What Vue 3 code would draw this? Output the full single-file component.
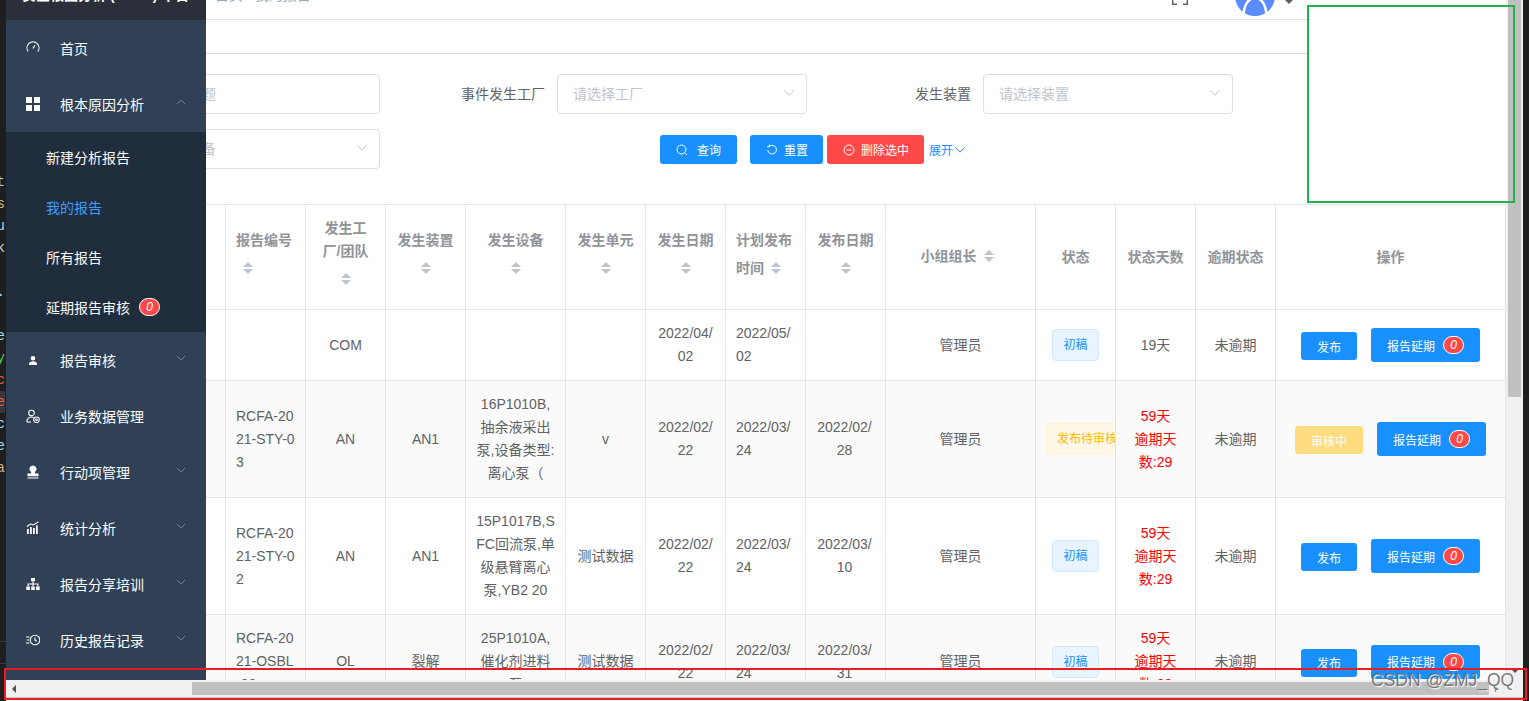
<script setup>
const stripLines = [
  ['nt', '#9cdcfe'], ['t.s', '#d4b483'], ['yu', '#9cdcfe'], ['ck', '#d4d4d4'], ['', ''], ['y.', '#9cdcfe'], ['', ''],
  ['ue', '#9cdcfe'], ['oy', '#4ec96f'], ['rc', '#e0604c'], ['e', '#e0604c'], ['rc', '#9cdcfe'], ['oe', '#9cdcfe'], ['na', '#d4b483']
]

const menu = [
  { label: '首页', fill: '', stroke: 'M2.2 10.5A6 6 0 1 1 11.8 10.5M7 7.5L9 4.2' },
  { label: '根本原因分析', open: true, fill: 'M0 0h6v6H0zM8 0h6v6H8zM0 8h6v6H0zM8 8h6v6H8z', stroke: '', children: [
    { label: '新建分析报告' }, { label: '我的报告', active: true }, { label: '所有报告' }, { label: '延期报告审核', badge: 0 }
  ] },
  { label: '报告审核', arrow: true, fill: 'M7 3a2.3 2.3 0 1 1 0 4.6 2.3 2.3 0 0 1 0-4.6zM3 12v-1.5c0-1.3 2-2.3 4-2.3s4 1 4 2.3V12z', stroke: '' },
  { label: '业务数据管理', fill: '', stroke: 'M5.5 1.2a2.8 2.8 0 1 1 0 5.6 2.8 2.8 0 0 1 0-5.6zM.8 13c0-3 1.8-5 4.7-5 .8 0 1.5.2 2 .5M5 13H.8M10.5 8a2.8 2.8 0 1 1 0 5.6 2.8 2.8 0 0 1 0-5.6zM10.5 10a.8.8 0 1 1 0 1.6.8.8 0 0 1 0-1.6z' },
  { label: '行动项管理', arrow: true, fill: 'M7 .5a3.6 3.6 0 0 1 2 6.6c-.3.4-.2 1 .2 1.4h3.3v2.8h-11V8.5h3.3c.4-.4.5-1 .2-1.4A3.6 3.6 0 0 1 7 .5zM1.5 12.6h11v.9h-11z', stroke: '' },
  { label: '统计分析', arrow: true, fill: 'M1 8h1.8v5H1zM4 6h1.8v7H4zM7 7h1.8v6H7zM10 4.5h1.8V13H10z', stroke: 'M1 5.5L4.5 3 7.5 4 12.5.8' },
  { label: '报告分享培训', arrow: true, fill: 'M5 1h4v3.2H5zM.3 9.5h3.6V13H.3zM5.2 9.5h3.6V13H5.2zM10.1 9.5h3.6V13h-3.6z', stroke: 'M7 4.2v5.3M2.1 9.5V7h9.8v2.5' },
  { label: '历史报告记录', arrow: true, fill: '', stroke: 'M0 4h3.5M.8 7h2.5M0 10h3.5M9 2.2a4.8 4.8 0 1 1 0 9.6 4.8 4.8 0 0 1 0-9.6zM9 4.5v2.7l1.8 1' }
]

const columns = [
  { w: 20, t: '' },
  { w: 80, t: '报告编号', sort: true, left: true },
  { w: 80, t: '发生工厂/团队', sort: true },
  { w: 80, t: '发生装置', sort: true },
  { w: 100, t: '发生设备', sort: true },
  { w: 80, t: '发生单元', sort: true },
  { w: 80, t: '发生日期', sort: true },
  { w: 80, t: '计划发布时间', sort: true, left: true },
  { w: 80, t: '发布日期', sort: true },
  { w: 150, t: '小组组长', sort: true },
  { w: 80, t: '状态' },
  { w: 80, t: '状态天数' },
  { w: 80, t: '逾期状态' },
  { w: 230, t: '操作' }
]

const rows = [
  { cells: ['', 'COM', '', '', '', '2022/04/02', '2022/05/02', '', '管理员'], tag: '初稿', tagType: 'info', days: '19天', late: false, action: '发布' },
  { cells: ['RCFA-2021-STY-03', 'AN', 'AN1', '16P1010B,抽余液采出泵,设备类型:离心泵（', 'v', '2022/02/22', '2022/03/24', '2022/02/28', '管理员'], tag: '发布待审核', tagType: 'warn', days: '59天', overdue: '逾期天数:29', late: true, action: '审核中' },
  { cells: ['RCFA-2021-STY-02', 'AN', 'AN1', '15P1017B,SFC回流泵,单级悬臂离心泵,YB2 20', '测试数据', '2022/02/22', '2022/03/24', '2022/03/10', '管理员'], tag: '初稿', tagType: 'info', days: '59天', overdue: '逾期天数:29', late: true, action: '发布' },
  { cells: ['RCFA-2021-OSBL-02', 'OL', '裂解', '25P1010A,催化剂进料泵', '测试数据', '2022/02/22', '2022/03/24', '2022/03/31', '管理员'], tag: '初稿', tagType: 'info', days: '59天', overdue: '逾期天数:29', late: true, action: '发布' }
]
</script>

<template>
  <div class="page">
    <div class="strip">
      <div v-for="(l, i) in stripLines" :key="i" class="strip-line" :class="{ hot: l[0] === 'e' }" :style="{ color: l[1] }">{{ l[0] }}</div>
      <div class="strip-sep first"></div>
      <div class="strip-sep"></div>
    </div>

    <div class="browser">
      <div class="view">
        <aside class="sidebar">
          <div class="logo"><span>安全根因分析 (RCFA) 平台</span></div>
          <template v-for="m in menu" :key="m.label">
            <div class="menu-item">
              <svg class="menu-icon" viewBox="0 0 14 14">
                <path v-if="m.fill" :d="m.fill" fill="#fff" />
                <path v-if="m.stroke" :d="m.stroke" fill="none" stroke="#fff" stroke-width="1.1" />
              </svg>
              <span>{{ m.label }}</span>
              <svg v-if="m.arrow || m.open" class="menu-arrow" viewBox="0 0 10 6">
                <path :d="m.open ? 'M1 5L5 1L9 5' : 'M1 1L5 5L9 1'" fill="none" stroke="#6f8094" stroke-width="1" />
              </svg>
            </div>
            <div v-if="m.children" class="submenu">
              <div v-for="c in m.children" :key="c.label" class="sub-item" :class="{ active: c.active }">
                <span>{{ c.label }}</span>
                <i v-if="c.badge !== undefined" class="badge">{{ c.badge }}</i>
              </div>
            </div>
          </template>
        </aside>

        <main class="main">
          <div class="navbar">
            <span class="crumb">首页 / 我的报告</span>
            <svg class="full-icon" viewBox="0 0 16 16">
              <path d="M.7 11v4.3H5M11 15.3h4.3V11" fill="none" stroke="#5a5e66" stroke-width="1.4" />
            </svg>
            <svg class="avatar" viewBox="0 0 40 40">
              <circle cx="20" cy="20" r="20" fill="#5b8cff" />
              <path d="M8.500 37C10 28 14 22 20 22S30 28 31.500 37" fill="none" stroke="#fff" stroke-width="2.500" />
            </svg>
            <i class="nav-caret"></i>
          </div>
          <div class="tagsbar"></div>

          <div class="filters">
            <div class="field">
              <div class="input"><span>请输入标题</span></div>
            </div>
            <div class="field">
              <label>事件发生工厂</label>
              <div class="input"><span>请选择工厂</span>
                <svg class="sel-arrow" viewBox="0 0 10 6"><path d="M.5.5L5 5.2L9.500.5" fill="none" stroke="#c0c4cc" /></svg>
              </div>
            </div>
            <div class="field">
              <label>发生装置</label>
              <div class="input"><span>请选择装置</span>
                <svg class="sel-arrow" viewBox="0 0 10 6"><path d="M.5.5L5 5.2L9.500.5" fill="none" stroke="#c0c4cc" /></svg>
              </div>
            </div>
            <div class="field">
              <div class="input"><span>请选择设备</span>
                <svg class="sel-arrow" viewBox="0 0 10 6"><path d="M.5.5L5 5.2L9.500.5" fill="none" stroke="#c0c4cc" /></svg>
              </div>
            </div>
            <div class="actions">
              <button class="btn blue search">
                <svg viewBox="0 0 12 12"><path d="M5.500 1a4.500 4.500 0 1 1 0 9 4.500 4.500 0 0 1 0-9zM8.800 8.800L11 11" fill="none" stroke="#fff" /></svg>
                查询
              </button>
              <button class="btn blue reset">
                <svg viewBox="0 0 12 12"><path d="M3.200 2.500A4.300 4.300 0 1 1 1.800 6M3.400.5v2.300H1" fill="none" stroke="#fff" /></svg>
                重置
              </button>
              <button class="btn red">
                <svg viewBox="0 0 12 12"><path d="M6 1a5 5 0 1 1 0 10A5 5 0 0 1 6 1zM3.500 6h5" fill="none" stroke="#fff" /></svg>
                删除选中
              </button>
              <span class="expand">展开
                <svg viewBox="0 0 10 6"><path d="M.5.500L5 5.200L9.500.500" fill="none" stroke="#1890ff" /></svg>
              </span>
            </div>
          </div>

          <table class="grid">
            <colgroup>
              <col v-for="c in columns" :key="c.t" :style="{ width: c.w + 'px' }" />
            </colgroup>
            <thead>
              <tr>
                <th v-for="c in columns" :key="c.t" :class="{ left: c.left }">
                  <div class="cell">{{ c.t }}<span v-if="c.sort" class="sorter"></span></div>
                </th>
              </tr>
            </thead>
            <tbody>
              <tr v-for="(r, i) in rows" :key="i" :class="{ striped: i % 2 === 1 }">
                <td></td>
                <td v-for="(v, j) in r.cells" :key="j" :class="{ left: j === 0 || j === 6 }">
                  <div class="cell" :class="{ published: j === 7 }">{{ v }}</div>
                </td>
                <td><div class="cell"><span class="tag" :class="r.tagType">{{ r.tag }}</span></div></td>
                <td>
                  <div class="cell" :class="{ overdue: r.late }">{{ r.days }}<template v-if="r.late"><br />{{ r.overdue }}</template></div>
                </td>
                <td><div class="cell">未逾期</div></td>
                <td>
                  <div class="ops">
                    <button class="op" :class="r.action === '审核中' ? 'pending' : 'blue'">{{ r.action }}</button>
                    <button class="delay blue">报告延期<i class="badge">0</i></button>
                  </div>
                </td>
              </tr>
            </tbody>
          </table>
        </main>

        <div class="vscroll">
          <div class="vthumb"></div>
          <i class="vdown"></i>
        </div>
      </div>

      <div class="hscroll">
        <i class="hleft"></i>
        <div class="hthumb"></div>
        <i class="hright"></i>
      </div>
      <div class="foot"></div>
    </div>

    <div class="strip right"></div>

    <div class="mask"></div>
    <div class="mark green"></div>
    <div class="mark red-mark"></div>
    <div class="watermark">CSDN @ZMJ_QQ</div>
  </div>
</template>

<style>
html, body { margin: 0; padding: 0; overflow: hidden; }
</style>

<style scoped>
.page {
  position: relative;
  display: flex;
  width: 1529px;
  height: 701px;
  overflow: hidden;
  background: #1e1e1e;
  font-family: "Liberation Sans", "Noto Sans CJK SC", sans-serif;
  font-size: 14px;
  color: #606266;
}
button { font-family: inherit; border: 0; }

.strip { width: 6px; flex: none; padding-top: 171px; overflow: hidden; box-sizing: border-box; background: #1e1e1e; }
.strip.right { padding: 0; }
.strip-line {
  display: flex;
  justify-content: flex-end;
  height: 22px;
  line-height: 22px;
  width: 5px;
  overflow: hidden;
  white-space: nowrap;
  font-family: "Liberation Mono", monospace;
  font-size: 14px;
}
.strip-line.hot { background: #37373d; }
.strip-sep { height: 21px; border-bottom: 1px solid #3a3a3a; }
.strip-sep.first { margin-top: 141px; }

.browser { width: 1517px; flex: none; display: flex; flex-direction: column; background: #fff; }
.view { display: flex; height: 680px; overflow: hidden; }

.sidebar { width: 200px; flex: none; background: #304156; overflow: hidden; }
.logo {
  height: 20px;
  display: flex;
  align-items: flex-end;
  overflow: hidden;
  background: #2b2f3a;
  padding-left: 16px;
  color: #fff;
  font-weight: 700;
  font-size: 14px;
  white-space: nowrap;
}
.logo span { display: block; line-height: 16px; margin-bottom: 17px; }
.menu-item {
  height: 56px;
  display: flex;
  align-items: center;
  padding-left: 20px;
  color: #fff;
}
.menu-icon { width: 14px; height: 14px; margin-right: 20px; flex: none; }
.menu-arrow { width: 10px; height: 6px; margin-left: auto; margin-right: 20px; margin-top: -4px; }
.submenu { background: #1f2d3d; }
.sub-item {
  height: 50px;
  display: flex;
  align-items: center;
  padding-left: 40px;
  color: #fff;
}
.sub-item.active { color: #409eff; }
.sub-item .badge { margin-left: 9px; }

.badge {
  display: inline-flex;
  align-items: center;
  justify-content: center;
  box-sizing: border-box;
  height: 18px;
  min-width: 21px;
  padding: 0 6px;
  border: 1px solid #fff;
  border-radius: 10px;
  background: #ff4949;
  color: #fff;
  font-size: 12px;
  font-style: italic;
}

.main { width: 1300px; flex: none; overflow: hidden; background: #fff; }
.navbar {
  position: relative;
  box-sizing: border-box;
  height: 20px;
  display: flex;
  align-items: flex-end;
  overflow: hidden;
  border-bottom: 1px solid #e6e6e6;
}
.crumb { margin: 0 0 17px 9px; line-height: 14px; font-size: 14px; color: #97a8be; white-space: nowrap; }
.full-icon { width: 16px; height: 16px; flex: none; margin: 0 0 14px auto; }
.avatar { width: 40px; height: 40px; flex: none; margin: 0 0 3px 47px; }
.nav-caret {
  flex: none;
  width: 0;
  height: 0;
  margin: 0 213px 15px 10px;
  border: 4px solid transparent;
  border-top-color: #5a5e66;
  border-bottom: 0;
}
.tagsbar {
  height: 33px;
  background: #fff;
  border-bottom: 1px solid #d8dce5;
  box-shadow: 0 1px 3px rgba(0, 0, 0, .12);
}

.filters {
  display: grid;
  grid-template-columns: 426px 427px 426px;
  gap: 15px 0;
  margin-left: -252px;
  padding-top: 20px;
  height: 130px;
  align-content: start;
  box-sizing: content-box;
  background: #fff;
}
.field { display: flex; justify-content: flex-end; align-items: center; }
.field label { margin: 0 12px 2px 0; color: #606266; white-space: nowrap; }
.input {
  box-sizing: border-box;
  width: 250px;
  height: 40px;
  display: flex;
  align-items: center;
  padding: 0 12px 2px 15px;
  background: #fff;
  border: 1px solid #dcdfe6;
  border-radius: 4px;
  color: #c0c4cc;
}
.sel-arrow { width: 10px; height: 6px; margin-left: auto; }
.actions { grid-column: 2 / span 2; display: flex; align-items: flex-start; padding: 6px 0 0 280px; }
.btn {
  height: 29px;
  display: flex;
  align-items: center;
  gap: 6px;
  padding: 0 15px 0 16px;
  border-radius: 3px;
  color: #fff;
  font-size: 12px;
}
.btn svg { width: 12px; height: 12px; flex: none; }
.btn.search { gap: 9px; padding-right: 16px; }
.btn.reset { margin-left: 13px; }
.btn.red { margin-left: 4px; background: #ff4949; }
.blue { background: #1890ff; }
.expand { display: flex; align-items: center; gap: 2px; height: 29px; margin-left: 5px; color: #1890ff; font-size: 12px; }
.expand svg { width: 10px; height: 6px; }

.grid {
  width: 1300px;
  table-layout: fixed;
  border-collapse: separate;
  border-spacing: 0;
  border-top: 1px solid #dfe6ec;
}
.grid th, .grid td {
  padding: 12px 0;
  overflow: hidden;
  text-align: center;
  vertical-align: middle;
  border-right: 1px solid #dfe6ec;
  border-bottom: 1px solid #dfe6ec;
  background: #fff;
}
.grid th { color: #909399; font-weight: 700; }
.grid .left { text-align: left; }
.grid .striped td { background: #fafafa; }
.cell { padding: 0 10px; line-height: 23px; word-break: break-all; }
.cell.published { padding-right: 12px; }
.overdue { color: #f00; }

.sorter {
  position: relative;
  display: inline-block;
  width: 24px;
  height: 34px;
  vertical-align: middle;
}
.sorter::before, .sorter::after {
  content: "";
  position: absolute;
  left: 7px;
  border: 5px solid transparent;
}
.sorter::before { top: 5px; border-bottom-color: #c0c4cc; }
.sorter::after { top: 17px; border-top-color: #c0c4cc; }

.tag {
  display: inline-block;
  box-sizing: border-box;
  height: 32px;
  line-height: 30px;
  padding: 0 10px;
  border: 1px solid;
  border-radius: 4px;
  font-size: 12px;
  white-space: nowrap;
}
.tag.info { background: #e8f4ff; border-color: #d1e9ff; color: #1890ff; }
.tag.warn { background: #fff8e6; border-color: #fff1cc; color: #ffba00; }

.ops { display: flex; justify-content: center; align-items: center; gap: 14px; }
.op {
  height: 28px;
  margin-top: 2px;
  padding: 0 16px;
  border-radius: 3px;
  color: #fff;
  font-size: 12px;
}
.op.pending { background: #ffdc80; }
.delay {
  height: 34px;
  display: flex;
  align-items: center;
  gap: 8px;
  padding: 0 16px;
  border-radius: 3px;
  color: #fff;
  font-size: 12px;
}

.vscroll { position: relative; width: 17px; flex: none; background: #f0f0f0; }
.vthumb { width: 13px; height: 397px; margin-left: 2px; background: #c0c0c0; }
.vdown {
  position: absolute;
  left: 5px;
  top: 669px;
  border: 4px solid transparent;
  border-top-color: #505050;
  border-bottom: 0;
}

.hscroll { height: 17px; display: flex; align-items: center; background: #f0f0f0; }
.hleft { margin-left: 6px; border: 4px solid transparent; border-right-color: #505050; border-left: 0; }
.hthumb { width: 1297px; height: 13px; margin-left: 176px; background: #c0c0c0; }
.hright { margin-left: 6px; border: 3px solid transparent; border-left-color: #505050; border-right: 0; }
.foot { height: 4px; background: #fff; border-top: 1px solid #c8c8c8; box-sizing: border-box; }

.mask { position: absolute; left: 1307px; top: 5px; width: 200px; height: 197px; background: #fff; }
.mark { position: absolute; box-sizing: border-box; pointer-events: none; }
.green { left: 1307px; top: 5px; width: 208px; height: 198px; border: 2px solid #22b14c; }
.red-mark { left: 4px; top: 668px; width: 1523px; height: 32px; border: 2px solid #ed1c24; }
.watermark {
  position: absolute;
  left: 1371px;
  top: 669px;
  font-size: 17.5px;
  line-height: 22px;
  white-space: nowrap;
  color: rgba(105, 105, 105, .9);
  text-shadow: 1px 1px 1px #fff;
}
</style>
